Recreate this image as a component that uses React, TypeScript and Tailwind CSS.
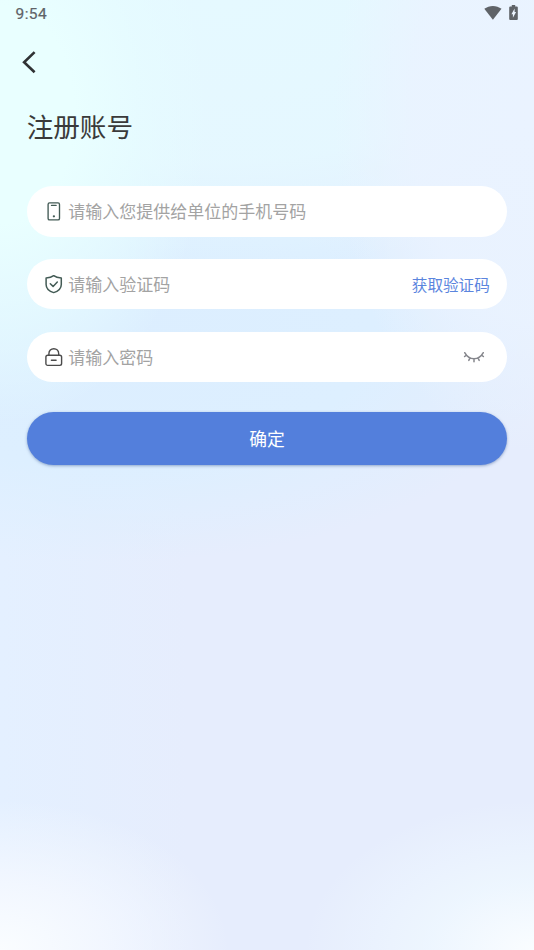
import type { ReactNode } from "react";

function StatusBar() {
  return (
    <header className="flex h-7 items-center justify-between pl-[15.5px] pr-4 text-[#5f6368]">
      <span className="pt-[2px] font-[Roboto,sans-serif] text-[15.5px] font-normal leading-none tracking-[0.45px] [-webkit-text-stroke:0.2px_#5f6368]">9:54</span>
      <div className="flex h-full items-start gap-[7px] pt-[5px]">
        <svg width="18" height="15" viewBox="0 0 18 15" fill="currentColor">
          <path d="M.3 3.8C5.2-.1 12.6-.1 17.5 3.8L8.9 14.8Z" />
        </svg>
        <svg width="9" height="15" viewBox="0 0 9 15">
          <path d="M2.8 0h3.4v1.5h1.6q1 0 1 1v11.4q0 1-1 1H1.2q-1 0-1-1V2.5q0-1 1-1h1.6Z" fill="currentColor" />
          <path d="M5.6 3.6v3.5h1.5l-3.2 5.6V9.2H2.4Z" fill="#ebf4ff" />
        </svg>
      </div>
    </header>
  );
}

function PhoneIcon() {
  return (
    <svg width="18" height="20" viewBox="0 0 18 20" fill="none" stroke="#435b55" strokeWidth="1.35" strokeLinecap="round">
      <rect x="3.1" y="1.9" width="11.4" height="17" rx="1.5" />
      <path d="M6.5 4.4h4.6" />
      <circle cx="8.9" cy="15.3" r="1.15" fill="#435b55" stroke="none" />
    </svg>
  );
}

function ShieldIcon() {
  return (
    <svg width="18" height="20" viewBox="0 0 18 20" fill="none" stroke="#435b55" strokeWidth="1.5" strokeLinecap="round" strokeLinejoin="round">
      <path d="M8.7 1.7C7 3.1 4 4 1.1 4.1v6.3c0 3.8 3.3 6.8 7.6 8.2 4.3-1.4 7.6-4.4 7.6-8.2V4.1C13.4 4 10.4 3.1 8.7 1.7Z" />
      <path d="m5.3 9.7 2.8 2.7 4.2-4.3" />
    </svg>
  );
}

function LockIcon() {
  return (
    <svg width="18" height="20" viewBox="0 0 18 20" fill="none" stroke="#4b4b4b" strokeWidth="1.4" strokeLinecap="round">
      <rect x=".9" y="8.2" width="15.7" height="10.2" rx="1.8" />
      <path d="M3.9 8V6.7c0-3 2.1-5 4.9-5s4.9 2 4.9 5V8M6.4 13.3h4.7" />
    </svg>
  );
}

function ClosedEyeIcon() {
  return (
    <svg className="mr-[4.5px]" width="22" height="12" viewBox="0 0 22 12" fill="none" stroke="#85868c" strokeWidth="1.5" strokeLinecap="round">
      <path d="M1.7 1.7C6.3 9.9 15.7 9.9 20.3 1.7M3.2 4.3 1.6 5.5M6.9 7.2 5.8 9.4M11 8.2v2.5M15.1 7.2l1.1 2.2M18.8 4.3l1.6 1.2" />
    </svg>
  );
}

type FieldProps = { icon: ReactNode; placeholder: string; trailing?: ReactNode };

function Field({ icon, placeholder, trailing }: FieldProps) {
  return (
    <div className="flex h-[50.4px] items-center rounded-full bg-white pl-[18px] pr-[17.5px]">
      {icon}
      <span className="ml-[5.5px] flex-1 text-[17px] font-normal leading-6 text-[#a3a3a3]">{placeholder}</span>
      {trailing}
    </div>
  );
}

export default function App() {
  return (
    <main className="h-[950px] w-full overflow-hidden bg-[#e6edfd] bg-[radial-gradient(ellipse_230px_150px_at_0%_100%,#fafdff_0%,#f4f8ffdd_45%,#e8f3ff00_100%),radial-gradient(ellipse_230px_150px_at_100%_100%,#fafdff_0%,#eff8ffcc_45%,#e6f2ff00_100%),radial-gradient(ellipse_210px_310px_at_0%_12%,#e9ffff_0%,#e9ffff_35%,#e6fcffaa_68%,#e3f8ff00_100%),radial-gradient(ellipse_200px_340px_at_100%_12%,#eaf3ff_0%,#eaf3ffdd_60%,#ebf2ff00_100%),radial-gradient(ellipse_480px_270px_at_42%_0%,#e5f9ff_0%,#e5f8ffee_60%,#e3f4ff00_100%),radial-gradient(ellipse_460px_230px_at_20%_35%,#dceeff_0%,#ddefff_58%,#e6edfd00_100%),linear-gradient(to_right,#e4f0ff_0%,#e6edfd_35%)] font-['Noto_Sans_CJK_SC',sans-serif]">
      <StatusBar />
      <nav className="flex h-[68px] items-center pl-[21px]">
        <svg width="16" height="24" viewBox="0 0 16 24" fill="none" stroke="#303234" strokeWidth="2.6">
          <path d="M13.6 2.1 3.1 12.2l10.5 10.1" />
        </svg>
      </nav>
      <section className="px-[26.7px]">
        <h1 className="mt-[10px] text-[26.6px] font-normal leading-10 text-[#3a3a3a]">注册账号</h1>
        <div className="mt-[40.3px] flex flex-col gap-[22.3px]">
          <Field icon={<PhoneIcon />} placeholder="请输入您提供给单位的手机号码" />
          <Field
            icon={<ShieldIcon />}
            placeholder="请输入验证码"
            trailing={<button className="text-[15.6px] leading-6 text-[#5b85de]">获取验证码</button>}
          />
          <Field icon={<LockIcon />} placeholder="请输入密码" trailing={<ClosedEyeIcon />} />
        </div>
        <button className="mt-[30px] h-[53px] w-full rounded-full bg-[#537fdc] text-[17.8px] text-white shadow-[0_1px_3px_#3e5f9980]">确定</button>
      </section>
    </main>
  );
}
